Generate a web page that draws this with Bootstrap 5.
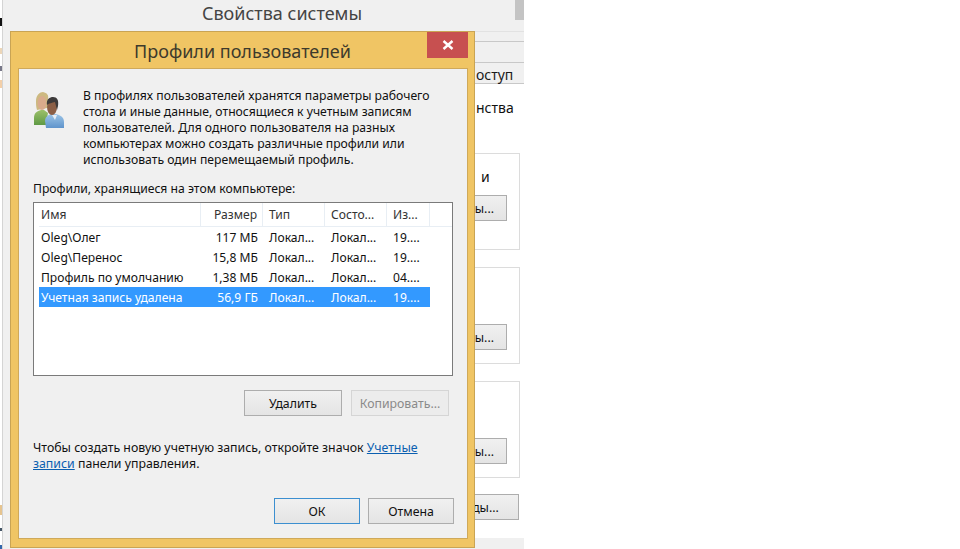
<!doctype html>
<html lang="ru"><head><meta charset="utf-8">
<link href="https://cdn.jsdelivr.net/npm/bootstrap@5.3.0/dist/css/bootstrap.min.css" rel="stylesheet">
<style>
html,body{margin:0;height:549px;overflow:hidden;background:#fff}
body{font-family:"Noto Sans","Open Sans",sans-serif;font-size:12.2px;color:#111;line-height:16px}
.desk{width:960px;height:549px;position:relative;overflow:hidden}
.edge{position:absolute;left:0;top:0;width:2px;height:549px;background:linear-gradient(#fff 18px,#111 18px,#111 26px,#fff 26px,#fff 48px,#ecd6b8 48px,#ecd6b8 54px,#fff 54px,#fff 66px,#778 66px,#778 71px,#fff 71px,#fff 80px,#f3cfa8 80px,#f3cfa8 88px,#fff 88px,#fff 505px,#e6c48f 505px,#e6c48f 515px,#fff 515px,#fff 528px,#456 528px,#456 531px,#fff 531px,#fff 545px,#36a 545px)}
.syswin{position:absolute;left:2px;top:0;width:522px;height:549px;background:#f0f0f0;border-left:1px solid #d4d4d4}
.systitle{height:31px;font-size:18px;line-height:26px;text-align:center;color:#444;padding-left:37px}
.sysscroll{position:absolute;left:512px;top:0;width:9px;height:20px;background:#c4c4c4}
.sysright{margin-left:457px;height:518px}
.sline{height:10px;border-top:1px solid #e2e2e2}
.stab{height:21px;border-top:1px solid #c8c8c8}
.stabtext{padding-left:16px;font-size:14px;line-height:23px;color:#1a1a1a;white-space:nowrap}
.sysbody{height:455px;background:#fff;border-top:1px solid #c8c8c8;padding-top:16px;font-size:14px}
.sysnote{padding-left:16px;height:16px;white-space:nowrap}
.sysgroup{width:60px;height:97px;border:1px solid #dcdcdc;margin-bottom:17px}
.sysgroup.first{margin-top:37px}
.grouptext{padding:15px 0 0 20px;height:41px}
.grouppad{height:56px}
.winbtn{background:linear-gradient(#f0f0f0,#e4e4e4);border:1px solid #adadad;color:#111;font-size:12.3px;line-height:25px;height:26px;text-align:center;border-radius:0;padding:0}
.winbtn:disabled{opacity:1;color:#8a8a8a;border-color:#d5d5d5;background:#ececec}
.sidebtn{width:39px;margin-left:7px;text-align:right;padding-right:12px}
.sidewide{width:51px;margin-left:8px;margin-top:-1px;padding-right:16px;display:block}
.dlg{position:absolute;left:10px;top:31px;width:465px;height:517px;background:#f0c564;border:1px solid #c9a454}
.dlgtitle{height:36px;font-size:18px;line-height:38px;text-align:center;color:#3d3a2c}
.closex{position:absolute;right:6px;top:0;width:41px;height:26px;background:#c75050}
.dlgbody{margin-left:7px;width:450px;height:471px;background:#f0f0f0;border:1px solid #cfa95a;padding:19px 0 0 14px}
.dlgicon{margin-top:4px;margin-right:18px;flex:none}
.intro{margin:0;white-space:nowrap}
.cap{margin:13px 0 5px}
.lst{width:420px;height:174px;background:#fff;border:1px solid #7a7a7a;font-size:12.1px}
.lh{height:24px;line-height:24px;border-bottom:1px solid #e8eef4;color:#333;margin-left:5px}
.lr{height:20px;line-height:21px;width:391px;margin-left:5px}
.lr.sel{background:#3399ff;color:#fff}
.lh>span,.lr>span{display:block;white-space:nowrap;overflow:hidden;flex:none}
.lh>span{border-right:1px solid #e8eef4;height:23px}
.c1{width:162px;padding-left:2px}.c2{width:62px;text-align:right;padding-right:5px}.c3{width:62px;padding-left:6px}.c4{width:62px;padding-left:6px}.c5{width:43px;padding-left:6px}
.acts{width:420px;padding-right:4px;margin-top:14px;gap:9px}
.acts .winbtn{width:98px}
.note{width:420px;margin:24px 0 26px;font-size:12.33px}
.note a{color:#0b5fb0}
.foot{width:421px;gap:8px}
.foot .winbtn{width:86px;line-height:26px}
.ok{border-color:#3c8fd0}
</style></head><body>
<div class="desk">
 <div class="edge"></div>
 <div class="syswin">
  <div class="systitle">Свойства системы</div>
  <div class="sysscroll"></div>
  <div class="sysright">
   <div class="sline"></div>
   <div class="stab"></div>
   <div class="stab stabtext">оступ</div>
   <div class="sysbody">
    <div class="sysnote">нства</div>
    <div class="sysgroup first">
     <div class="grouptext">и</div>
     <button class="btn winbtn sidebtn">ы...</button>
    </div>
    <div class="sysgroup"><div class="grouppad"></div><button class="btn winbtn sidebtn">ы...</button></div>
    <div class="sysgroup"><div class="grouppad"></div><button class="btn winbtn sidebtn">ы...</button></div>
    <button class="btn winbtn sidewide">ды...</button>
   </div>
  </div>
 </div>
 <div class="dlg">
  <div class="dlgtitle">Профили пользователей</div>
  <div class="closex d-flex align-items-center justify-content-center"><svg width="12" height="10" viewBox="0 0 12 10"><path d="M1.5 1l9 8M10.5 1l-9 8" stroke="#fff" stroke-width="2.4" fill="none"/></svg></div>
  <div class="dlgbody">
   <div class="d-flex">
    <svg class="dlgicon" width="32" height="37" viewBox="0 0 32 37" style="filter:blur(.35px)">
     <defs>
      <linearGradient id="gs" x1="0" y1="0" x2="0" y2="1"><stop offset="0" stop-color="#9cc06a"/><stop offset="1" stop-color="#5f9a45"/></linearGradient>
      <linearGradient id="bs" x1="0" y1="0" x2="0" y2="1"><stop offset="0" stop-color="#9cc4e6"/><stop offset="1" stop-color="#5f94cc"/></linearGradient>
     </defs>
     <path d="M1 33v-7c0-5 3-7 7-8h3l4 3-2 12z" fill="url(#gs)"/>
     <path d="M3 9c0-6 4-9 7-9 4 1 6 3 5 7l-1 9-10 2c-1-3-1-6-1-9z" fill="#cdb981"/>
     <ellipse cx="9" cy="11" rx="4.4" ry="7" fill="#d9ab8c"/>
     <path d="M13 36l-1-7c0-4 3-6 6-7h5c4 1 8 3 8 8v6z" fill="url(#bs)"/>
     <path d="M19 23l3 5 2-5z" fill="#e8eef4"/>
     <ellipse cx="19" cy="15" rx="5" ry="8" fill="#8c5f46"/>
     <path d="M14 13c-1-6 3-8 6-8 4 0 6 3 5 9l-1 4-2-8c-3 1-6 1-8 3z" fill="#3d3a3a"/>
    </svg>
    <p class="intro">В профилях пользователей хранятся параметры рабочего<br>стола и иные данные, относящиеся к учетным записям<br>пользователей. Для одного пользователя на разных<br>компьютерах можно создать различные профили или<br>использовать один перемещаемый профиль.</p>
   </div>
   <p class="cap">Профили, хранящиеся на этом компьютере:</p>
   <div class="lst">
    <div class="lh d-flex"><span class="c1">Имя</span><span class="c2">Размер</span><span class="c3">Тип</span><span class="c4">Состо...</span><span class="c5">Из...</span></div>
    <div class="lr d-flex"><span class="c1">Oleg\Олег</span><span class="c2">117 МБ</span><span class="c3">Локал...</span><span class="c4">Локал...</span><span class="c5">19....</span></div>
    <div class="lr d-flex"><span class="c1">Oleg\Перенос</span><span class="c2">15,8 МБ</span><span class="c3">Локал...</span><span class="c4">Локал...</span><span class="c5">19....</span></div>
    <div class="lr d-flex"><span class="c1">Профиль по умолчанию</span><span class="c2">1,38 МБ</span><span class="c3">Локал...</span><span class="c4">Локал...</span><span class="c5">04....</span></div>
    <div class="lr d-flex sel"><span class="c1">Учетная запись удалена</span><span class="c2">56,9 ГБ</span><span class="c3">Локал...</span><span class="c4">Локал...</span><span class="c5">19....</span></div>
   </div>
   <div class="acts d-flex justify-content-end"><button class="btn winbtn">Удалить</button><button class="btn winbtn" disabled>Копировать...</button></div>
   <p class="note">Чтобы создать новую учетную запись, откройте значок <a href="#">Учетные<br>записи</a> панели управления.</p>
   <div class="foot d-flex justify-content-end"><button class="btn winbtn ok">ОК</button><button class="btn winbtn">Отмена</button></div>
  </div>
 </div>
</div>
<script src="https://cdn.jsdelivr.net/npm/bootstrap@5.3.0/dist/js/bootstrap.bundle.min.js"></script>
</body></html>
